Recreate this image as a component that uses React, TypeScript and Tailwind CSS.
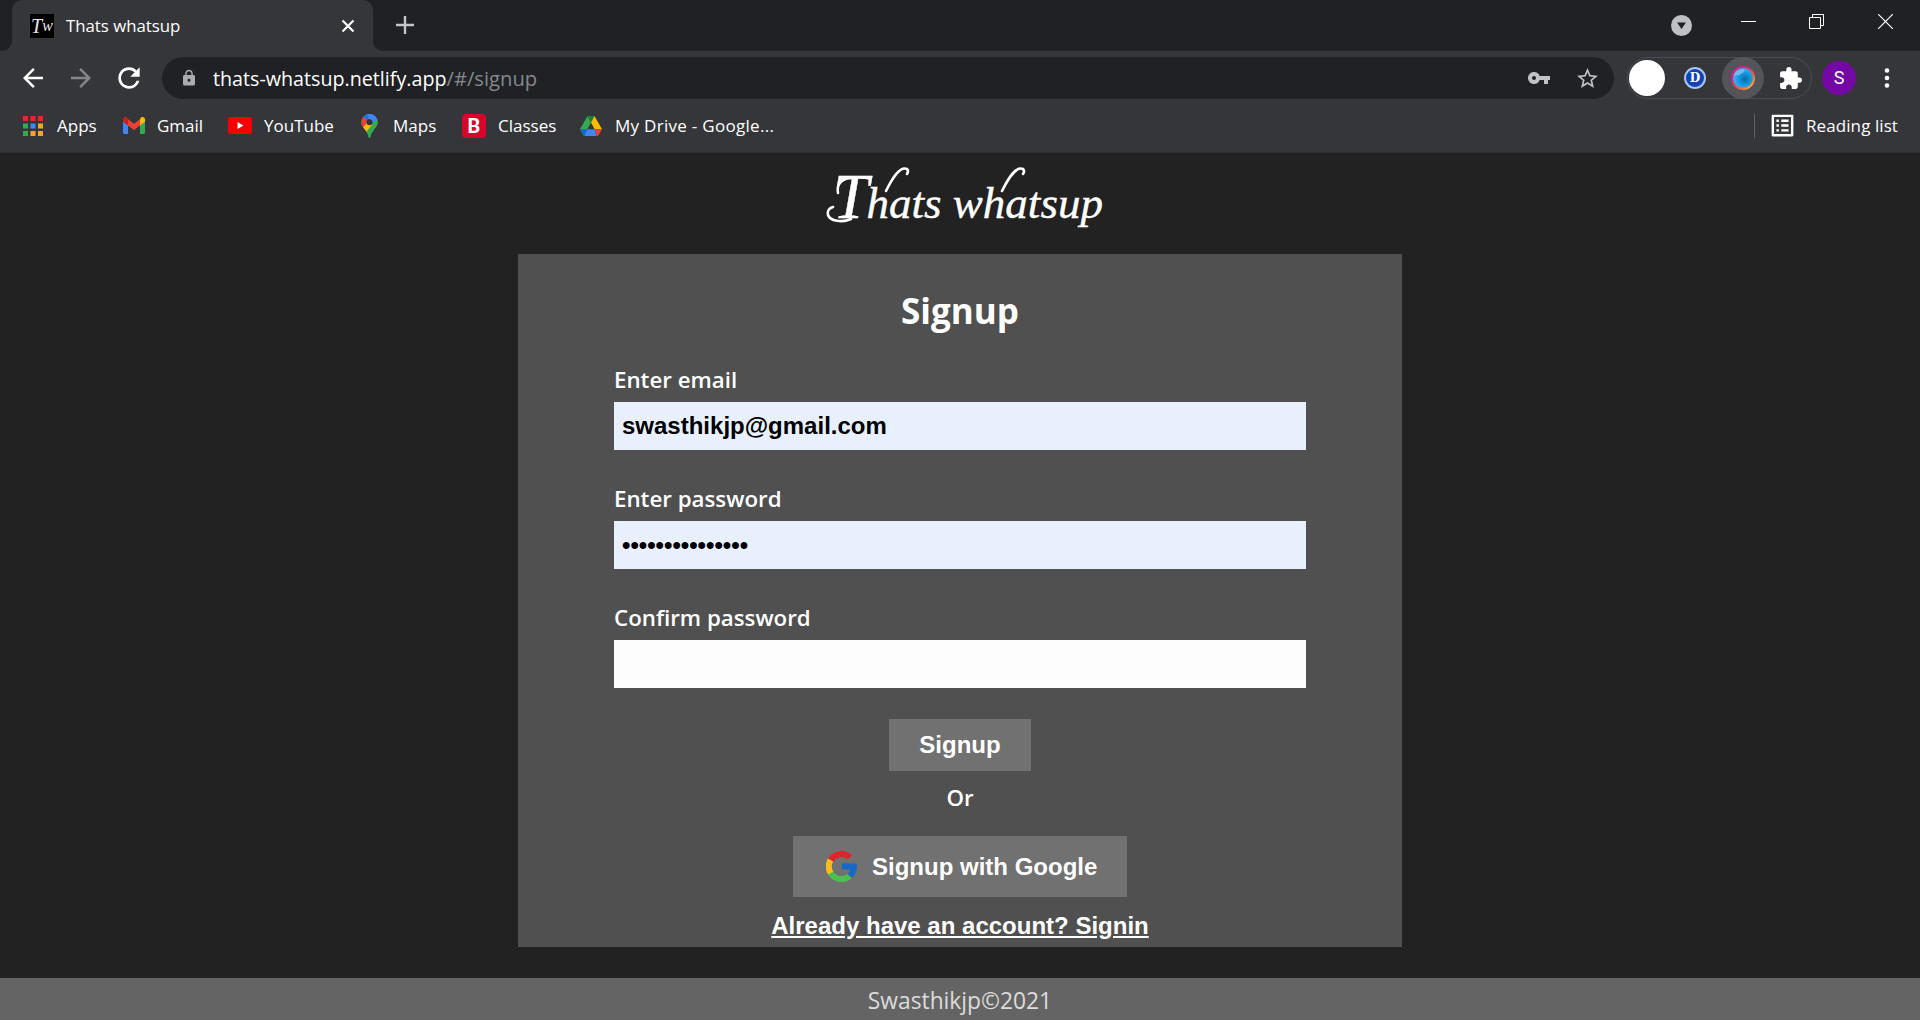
import type { ReactNode } from "react";
import {
  MdArrowBack,
  MdArrowForward,
  MdExtension,
  MdListAlt,
  MdLock,
  MdRefresh,
  MdStarBorder,
  MdVpnKey,
} from "react-icons/md";

function AppsIcon() {
  const colors = ["#f0222b", "#f0222b", "#f0222b", "#34a853", "#4285f4", "#f5a623", "#34a853", "#f5a623", "#f5a623"];
  return (
    <svg width="20" height="20" viewBox="0 0 20 20">
      {colors.map((c, i) => (
        <rect key={i} x={(i % 3) * 7.5} y={Math.floor(i / 3) * 7.5} width="5" height="5" fill={c} />
      ))}
    </svg>
  );
}

function GmailIcon() {
  return (
    <svg width="22" height="17" viewBox="0 0 22 17">
      <path d="M0 4h5v13H1.5A1.5 1.5 0 0 1 0 15.500Z" fill="#4285f4" />
      <path d="M17 4h5v11.500a1.500 1.500 0 0 1-1.500 1.500H17Z" fill="#34a853" />
      <path d="M5 8.600V2.300L11 6.800l6-4.500v6.300l-6 4.500Z" fill="#ea4335" />
      <path d="M0 2.500v2.300l5 3.800V2.300L4 .6C2.300-.6 0 .5 0 2.500Z" fill="#c5221f" />
      <path d="M22 2.500v2.300l-5 3.800V2.300L18 .6c1.700-1.200 4-.1 4 1.900Z" fill="#fbbc04" />
    </svg>
  );
}

function YouTubeIcon() {
  return (
    <svg width="24" height="17" viewBox="0 0 24 17">
      <rect width="24" height="17" rx="3" fill="#f60000" />
      <path d="M9.500 5v7l6-3.500Z" fill="#fff" />
    </svg>
  );
}

function MapsIcon() {
  return (
    <svg width="17" height="24" viewBox="0 0 17 24">
      <defs>
        <clipPath id="pin">
          <path d="M8.500 0A8.300 8.300 0 0 0 .2 8.300c0 5.200 6.800 8.500 7.500 15 .1.900 1.500.9 1.600 0 .7-6.500 7.500-9.800 7.500-15A8.300 8.300 0 0 0 8.500 0Z" />
        </clipPath>
      </defs>
      <g clipPath="url(#pin)">
        <rect width="17" height="24" fill="#34a853" />
        <path d="M0 0h17v3L8.500 8.300 0 3Z" fill="#1a73e8" />
        <path d="M6 0h11v5L10 10Z" fill="#4285f4" />
        <path d="M0 2l2.200 1L8.500 8.300 3 14.500 0 13Z" fill="#ea4335" />
        <path d="M2 13.500l5-6 5 3.500-7 9Z" fill="#fbbc04" />
        <path d="M5.500 17.500 17 4v20H7Z" fill="#34a853" />
      </g>
      <circle cx="8.500" cy="8.300" r="3" fill="#303338" />
    </svg>
  );
}

function DriveIcon() {
  return (
    <svg width="22" height="20" viewBox="0 0 22 20">
      <path d="M7.500 0 0 13.200 3.700 19.700 11 6.500Z" fill="#34a853" />
      <path d="M7.500 0h7L11 6.500Z" fill="#188038" />
      <path d="M14.500 0 22 13.200h-7.300L11 6.500Z" fill="#fbbc04" />
      <path d="M0 13.200h7.300L5.400 19.900c-.8 0-1.300-.5-1.700-1Z" fill="#1967d2" />
      <path d="M7.300 13.200h7.400l2 6.800H4.500Z" fill="#4285f4" />
      <path d="M14.700 13.200H22l-3.300 5.700c-.4.700-.9 1-1.800 1Z" fill="#ea4335" />
    </svg>
  );
}

function GoogleIcon() {
  return (
    <svg width="31" height="31" viewBox="0 0 31 31" fill="none" strokeWidth="6">
      <path d="M4.600 9.200A12.600 12.600 0 0 1 24 6.400" stroke="#e0242c" />
      <path d="M4.900 22.300A12.600 12.600 0 0 1 4.600 9" stroke="#fbbc1c" />
      <path d="M23.500 25.200A12.600 12.600 0 0 1 4.700 22" stroke="#4bc04f" />
      <path d="M15.800 12.500H30.600c1 5.500-.6 10.600-4.400 14.200l-4.700-3.900c1.500-1 2.500-2.400 2.900-4.300h-8.600Z" fill="#1668c7" />
    </svg>
  );
}

function Bookmark({ icon, label, className }: { icon: ReactNode; label: string; className: string }) {
  return (
    <div className={`flex shrink-0 items-center ${className}`}>
      {icon}
      <span className="whitespace-nowrap">{label}</span>
    </div>
  );
}

function TabStrip() {
  return (
    <div className="flex h-[51px] bg-[#202124] pl-3">
      <div className="relative flex w-[361px] items-center rounded-t-[10px] bg-[#35363a] pl-[18px] pr-[18px]">
        <span className="flex size-6 items-center justify-center bg-black font-['Liberation_Serif',serif] text-[16px] italic leading-none text-gray-200">
          <span className="text-[20px]">T</span>w
        </span>
        <span className="ml-3 text-[16.800px] text-white">Thats whatsup</span>
        <svg className="ml-auto" width="14" height="14" viewBox="0 0 14 14" stroke="#fff" strokeWidth="2.200">
          <path d="M1.500 1.500l11 11M12.500 1.500l-11 11" />
        </svg>
        <svg className="absolute -left-2.5 bottom-0" width="10" height="10" fill="#35363a">
          <path d="M10 0v10H0A10 10 0 0 0 10 0Z" />
        </svg>
        <svg className="absolute -right-2.5 bottom-0" width="10" height="10" fill="#35363a">
          <path d="M0 0v10h10A10 10 0 0 1 0 0Z" />
        </svg>
      </div>
      <svg className="ml-[23px] mt-4" width="18" height="18" viewBox="0 0 18 18" stroke="#c4c6ca" strokeWidth="2.400">
        <path d="M0 9h18M9 0v18" />
      </svg>
      <div className="ml-auto flex items-start pr-[27px]">
        <svg className="mt-[15px]" width="21" height="21" viewBox="0 0 21 21">
          <circle cx="10.500" cy="10.500" r="10.500" fill="#bdc1c6" />
          <path d="M6 7.500h9L10.500 14Z" fill="#202124" />
        </svg>
        <svg className="ml-[49px] mt-3.5" width="15" height="15" stroke="#fff">
          <path d="M0 7.500h15" />
        </svg>
        <svg className="ml-[53px] mt-3.5" width="15" height="15" stroke="#fff" fill="none">
          <path d="M.5 3.500h11v11H.5ZM3.500 3.500v-3h11v11h-3" />
        </svg>
        <svg className="ml-[54px] mt-3.5" width="15" height="15" stroke="#fff" strokeWidth="1.200">
          <path d="M0 0l15 15M15 0L0 15" />
        </svg>
      </div>
    </div>
  );
}

function Toolbar() {
  return (
    <div className="flex h-[54px] items-center bg-[#35363a] pl-[18px] pr-[30px]">
      <MdArrowBack size={30} color="#fff" />
      <MdArrowForward className="ml-[18px]" size={30} color="#85868c" />
      <MdRefresh className="ml-[17px]" size={32} color="#fff" />
      <div className="ml-[17px] flex h-[42px] w-[1452px] items-center rounded-full bg-[#202124] pl-[18px] pr-[14px]">
        <MdLock size={18} color="#a9acb1" />
        <span className="ml-[15px] pt-px text-[19.700px] leading-none text-white">
          thats-whatsup.netlify.app<span className="text-[20.200px] text-[#85888d]">/#/signup</span>
        </span>
        <MdVpnKey className="ml-auto" size={24} color="#c1c3c7" />
        <MdStarBorder className="ml-[24px]" size={25} color="#c1c3c7" />
      </div>
      <div className="ml-[13px] flex h-[42px] w-[185px] items-center rounded-full border border-[#4b4c51] pl-px">
        <span className="size-9 rounded-full bg-white" />
        <span className="ml-[19px] flex size-[22px] items-center justify-center rounded-full border-2 border-[#a9c4ee] bg-[#1143b5] font-['DejaVu_Serif',serif] text-[12px] font-bold leading-none text-white">
          D
        </span>
        <span className="ml-[16px] flex size-[42px] shrink-0 items-center justify-center rounded-full bg-[#54555b]">
          <svg width="24" height="24" viewBox="0 0 24 24">
            <defs>
              <linearGradient id="ring" x1="0" y1="0" x2="1" y2="1">
                <stop offset="0.3" stopColor="#d61f8d" />
                <stop offset="0.650" stopColor="#f0613a" />
                <stop offset="1" stopColor="#ffd34a" />
              </linearGradient>
              <radialGradient id="orb" cx="0.600" cy="0.550" r="0.650">
                <stop offset="0" stopColor="#086b9d" />
                <stop offset="0.500" stopColor="#149be4" />
                <stop offset="1" stopColor="#4fb9f2" />
              </radialGradient>
            </defs>
            <circle cx="12" cy="12" r="12" fill="url(#ring)" />
            <circle cx="12" cy="12" r="10" fill="url(#orb)" />
            <path d="M3 9c2-5 8-7 11-5-2 4-6 6-11 5Z" fill="#8fc3e6" opacity="0.700" />
          </svg>
        </span>
        <MdExtension className="ml-[14px] shrink-0" size={25} color="#fff" />
      </div>
      <span className="ml-[10px] flex size-[34px] items-center justify-center rounded-full bg-[#7408a4] font-[Roboto,sans-serif] text-[18px] leading-none text-white">
        S
      </span>
      <svg className="ml-auto" width="6" height="20" fill="#fff">
        <circle cx="3" cy="2.500" r="2.300" />
        <circle cx="3" cy="10" r="2.300" />
        <circle cx="3" cy="17.500" r="2.300" />
      </svg>
    </div>
  );
}

function BookmarksBar() {
  return (
    <div className="flex h-[48px] items-center border-b border-[#2a2b2d] bg-[#35363a] pb-[6px] pl-[23px] pr-[22px] text-[17px] leading-none text-white">
      <Bookmark className="w-[100px] gap-[14px]" icon={<AppsIcon />} label="Apps" />
      <Bookmark className="w-[105px] gap-3" icon={<GmailIcon />} label="Gmail" />
      <Bookmark className="w-[133px] gap-3" icon={<YouTubeIcon />} label="YouTube" />
      <Bookmark className="w-[101px] gap-[15px]" icon={<MapsIcon />} label="Maps" />
      <Bookmark
        className="w-[118px] gap-3"
        icon={
          <span className="flex size-6 items-center justify-center rounded-[4px] bg-[#d9042b] font-[Roboto,sans-serif] text-[20px] font-bold">
            B
          </span>
        }
        label="Classes"
      />
      <Bookmark className="gap-[13px] tracking-[0.290px]" icon={<DriveIcon />} label="My Drive - Google..." />
      <div className="ml-auto flex h-6 items-center border-l border-[#606167] pl-[13px]">
        <MdListAlt size={29} color="#fff" />
        <span className="ml-[9px] tracking-[0.080px]">Reading list</span>
      </div>
    </div>
  );
}

function BrandTitle() {
  return (
    <h1 className="relative mx-auto flex h-[101px] w-[330px] items-baseline whitespace-pre pl-[38px] font-['Liberation_Serif',serif] text-[45px] italic leading-[87px] text-white [-webkit-text-stroke:0.4px_white]">
      <span className="text-[64px]">T</span>
      <span className="-ml-[2px]">hats whatsup</span>
      <svg
        className="absolute left-0 top-0"
        width="330"
        height="101"
        viewBox="795 153 330 101"
        fill="none"
        stroke="#fff"
        strokeWidth="2.600"
        strokeLinecap="round"
      >
        <path d="M838 193c-2-10 5-15 15-15" />
        <path d="M851 219c-9 4-21 2-23-4-1-4 1-7 5-8" />
        <path d="M886 191c7-14 14-25 21-22q2 2 0 5" />
        <path d="M1002 191c7-14 14-25 21-22q2 2 0 5" />
      </svg>
    </h1>
  );
}

function Field({ label, children, className }: { label: string; children?: ReactNode; className: string }) {
  return (
    <label className="block h-[119px]">
      <span className="flex h-[44px] items-center text-[22.300px] font-semibold text-white">{label}</span>
      <span
        className={`flex h-12 items-center pl-2 font-['Liberation_Sans',sans-serif] text-[24px] font-bold text-black ${className}`}
      >
        {children}
      </span>
    </label>
  );
}

export default function App() {
  return (
    <div className="flex h-[1020px] w-[1920px] flex-col overflow-hidden bg-[#222222] font-['Open_Sans',sans-serif]">
      <TabStrip />
      <Toolbar />
      <BookmarksBar />
      <BrandTitle />
      <main className="mx-auto flex h-[693px] w-[884px] flex-col items-center bg-[#505050] pt-[28px]">
        <h2 className="h-[76px] text-[35px] font-bold leading-[57px] text-white">Signup</h2>
        <form className="w-[692px]">
          <Field label="Enter email" className="bg-[#e8f0fe]">
            swasthikjp@gmail.com
          </Field>
          <Field label="Enter password" className="bg-[#e8f0fe]">
            •••••••••••••••
          </Field>
          <Field label="Confirm password" className="bg-[#fdfdfd]" />
        </form>
        <button
          type="button"
          className="mt-[4px] h-[52px] w-[142px] shrink-0 bg-[#717171] font-['Liberation_Sans',sans-serif] text-[24px] font-bold text-white"
        >
          Signup
        </button>
        <span className="mt-[7px] h-[58px] text-[22.300px] font-semibold leading-[40px] text-white">Or</span>
        <button
          type="button"
          className="flex h-[61px] w-[334px] shrink-0 items-center gap-[15px] bg-[#717171] pl-[33px] font-['Liberation_Sans',sans-serif] text-[24px] font-bold text-white"
        >
          <GoogleIcon />
          Signup with Google
        </button>
        <a className="mt-[11px] font-['Liberation_Sans',sans-serif] text-[24px] font-bold leading-9 text-white underline">
          Already have an account? Signin
        </a>
      </main>
      <footer className="mt-auto flex h-[42px] items-center justify-center bg-[#646464] pt-1 text-[22.800px] leading-none text-[#dcdcdc]">
        Swasthikjp©2021
      </footer>
    </div>
  );
}
